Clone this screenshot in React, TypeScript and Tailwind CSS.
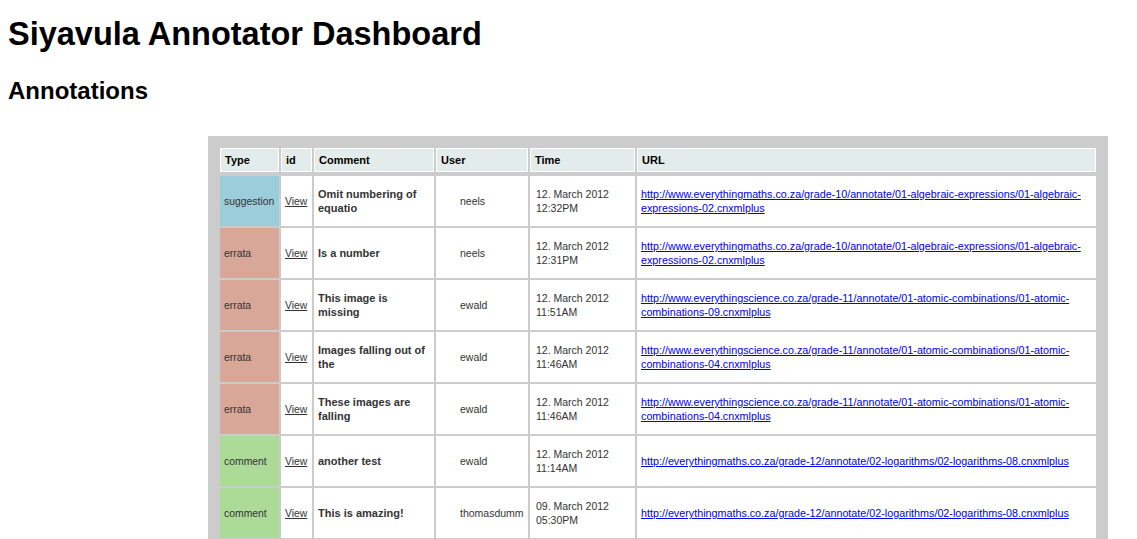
import React from "react";

type Row = {
  type: "suggestion" | "errata" | "comment";
  comment: string[];
  user: string;
  time: [string, string];
  url: string[];
};

const rows: Row[] = [
  {
    type: "suggestion",
    comment: ["Omit numbering of", "equatio"],
    user: "neels",
    time: ["12. March 2012", "12:32PM"],
    url: [
      "http://www.everythingmaths.co.za/grade-10/annotate/01-algebraic-expressions/01-algebraic-",
      "expressions-02.cnxmlplus",
    ],
  },
  {
    type: "errata",
    comment: ["Is a number"],
    user: "neels",
    time: ["12. March 2012", "12:31PM"],
    url: [
      "http://www.everythingmaths.co.za/grade-10/annotate/01-algebraic-expressions/01-algebraic-",
      "expressions-02.cnxmlplus",
    ],
  },
  {
    type: "errata",
    comment: ["This image is", "missing"],
    user: "ewald",
    time: ["12. March 2012", "11:51AM"],
    url: [
      "http://www.everythingscience.co.za/grade-11/annotate/01-atomic-combinations/01-atomic-",
      "combinations-09.cnxmlplus",
    ],
  },
  {
    type: "errata",
    comment: ["Images falling out of", "the"],
    user: "ewald",
    time: ["12. March 2012", "11:46AM"],
    url: [
      "http://www.everythingscience.co.za/grade-11/annotate/01-atomic-combinations/01-atomic-",
      "combinations-04.cnxmlplus",
    ],
  },
  {
    type: "errata",
    comment: ["These images are", "falling"],
    user: "ewald",
    time: ["12. March 2012", "11:46AM"],
    url: [
      "http://www.everythingscience.co.za/grade-11/annotate/01-atomic-combinations/01-atomic-",
      "combinations-04.cnxmlplus",
    ],
  },
  {
    type: "comment",
    comment: ["another test"],
    user: "ewald",
    time: ["12. March 2012", "11:14AM"],
    url: ["http://everythingmaths.co.za/grade-12/annotate/02-logarithms/02-logarithms-08.cnxmlplus"],
  },
  {
    type: "comment",
    comment: ["This is amazing!"],
    user: "thomasdumm",
    time: ["09. March 2012", "05:30PM"],
    url: ["http://everythingmaths.co.za/grade-12/annotate/02-logarithms/02-logarithms-08.cnxmlplus"],
  },
];

const typeBg: Record<Row["type"], string> = {
  suggestion: "bg-[#9ccddb]",
  errata: "bg-[#d9a797]",
  comment: "bg-[#acdb98]",
};

const headers = ["Type", "id", "Comment", "User", "Time", "URL"];

export default function App() {
  return (
    <div
      className="min-h-screen bg-white px-[8px] pt-[16px] text-black"
      style={{ fontFamily: '"Liberation Sans", Arial, sans-serif' }}
    >
      <h1 className="text-[32.5px] leading-[37px] font-bold">Siyavula Annotator Dashboard</h1>
      <h2 className="mt-[24px] text-[24px] leading-[28px] font-bold">Annotations</h2>

      <div className="mt-[31px] ml-[200px] w-[900px] bg-[#cccccc] p-[12px] pb-0">
        <div className="grid grid-cols-[59px_31px_120px_92px_105px_459px] gap-x-[2px] gap-y-[2px]">
          {headers.map((h) => (
            <div
              key={h}
              className="mb-[2px] flex h-[24px] items-center border border-white bg-[#e3ecea] pl-[4px] text-[11px] font-bold text-black"
            >
              {h}
            </div>
          ))}

          {rows.map((r, i) => (
            <React.Fragment key={i}>
              <div
                className={`flex h-[50px] items-center pl-[4px] pt-[1px] text-[10.4px] text-[#333333] ${typeBg[r.type]}`}
              >
                {r.type}
              </div>
              <div className="flex h-[50px] items-center bg-white pl-[4px] pt-[1px] text-[10.4px] text-[#333333]">
                <a href="#" className="text-[#333333] underline">
                  View
                </a>
              </div>
              <div className="flex h-[50px] items-center bg-white pl-[4px] text-[11px] leading-[14px] font-bold text-[#333333]">
                <span>
                  {r.comment.map((c, j) => (
                    <React.Fragment key={j}>
                      {j > 0 && <br />}
                      {c}
                    </React.Fragment>
                  ))}
                </span>
              </div>
              <div className="flex h-[50px] items-center bg-white pl-[24px] pt-[1px] text-[10.5px] text-[#333333]">
                {r.user}
              </div>
              <div className="flex h-[50px] items-center bg-white pl-[6px] text-[10.5px] leading-[14px] text-[#333333]">
                <span>
                  {r.time[0]}
                  <br />
                  {r.time[1]}
                </span>
              </div>
              <div className="flex h-[50px] items-center bg-white pl-[4px] text-[10.75px] leading-[14px]">
                <a href="#" className="text-[#0000ee] underline">
                  {r.url.map((u, j) => (
                    <React.Fragment key={j}>
                      {j > 0 && <br />}
                      {u}
                    </React.Fragment>
                  ))}
                </a>
              </div>
            </React.Fragment>
          ))}
        </div>
        <div className="h-[2px]" />
      </div>
    </div>
  );
}
